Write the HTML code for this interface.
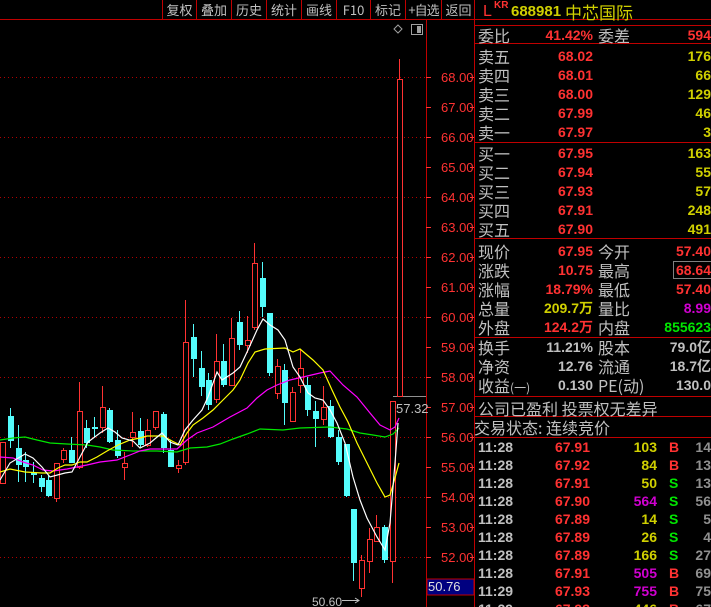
<!DOCTYPE html>
<html style="overflow:hidden;height:607px"><head><meta charset="utf-8"><style>
body{margin:0;background:#000;width:711px;height:607px;overflow:hidden;position:relative;font-family:"Liberation Sans","Noto Sans CJK SC",sans-serif}
.a{position:absolute;white-space:nowrap;line-height:16px}
.tb{position:absolute;top:0;height:19px;line-height:19px;color:#c0c0c0;font-size:13px;text-align:center;white-space:nowrap;font-family:"Noto Sans CJK SC",sans-serif}
.cn{font-size:16px;color:#c0c0c0;font-family:"Noto Sans CJK SC",sans-serif}
.n{font-size:14px;font-weight:bold}
.r{color:#ff3232}.y{color:#d0d000}.g{color:#00e600}.m{color:#d000d0}.w{color:#c0c0c0}.gr{color:#909090}
.hl{position:absolute;left:474px;width:237px;height:1px;background:#c00000}
</style></head><body>
<svg class="a" style="left:0;top:0;line-height:normal" width="711" height="607">
<g stroke="#c00000" stroke-width="1">
<line x1="0" y1="19.5" x2="711" y2="19.5"/>
<line x1="426.5" y1="19" x2="426.5" y2="607"/>
<line x1="474.5" y1="0" x2="474.5" y2="607"/>
<line x1="162.5" y1="0" x2="162.5" y2="19"/><line x1="196.5" y1="0" x2="196.5" y2="19"/><line x1="231.5" y1="0" x2="231.5" y2="19"/><line x1="266.5" y1="0" x2="266.5" y2="19"/><line x1="301.5" y1="0" x2="301.5" y2="19"/><line x1="336.5" y1="0" x2="336.5" y2="19"/><line x1="370.5" y1="0" x2="370.5" y2="19"/><line x1="405.5" y1="0" x2="405.5" y2="19"/><line x1="441.5" y1="0" x2="441.5" y2="19"/>
</g>
<g stroke="#b00000" stroke-dasharray="1,3">
<line x1="0" y1="77.5" x2="426" y2="77.5"/><line x1="0" y1="137.5" x2="426" y2="137.5"/><line x1="0" y1="197.5" x2="426" y2="197.5"/><line x1="0" y1="257.5" x2="426" y2="257.5"/><line x1="0" y1="317.5" x2="426" y2="317.5"/><line x1="0" y1="377.5" x2="426" y2="377.5"/><line x1="0" y1="437.5" x2="426" y2="437.5"/><line x1="0" y1="497.5" x2="426" y2="497.5"/><line x1="0" y1="557.5" x2="426" y2="557.5"/>
</g>
<g stroke="#ff3232">
<path d="M426 77.5h5M426 107.5h5M426 137.5h5M426 167.5h5M426 197.5h5M426 227.5h5M426 257.5h5M426 287.5h5M426 317.5h5M426 347.5h5M426 377.5h5M426 407.5h5M426 437.5h5M426 467.5h5M426 497.5h5M426 527.5h5M426 557.5h5"/>
<path d="M470 77.5h4M470 107.5h4M470 137.5h4M470 167.5h4M470 197.5h4M470 227.5h4M470 257.5h4M470 287.5h4M470 317.5h4M470 347.5h4M470 377.5h4M470 407.5h4M470 437.5h4M470 467.5h4M470 497.5h4M470 527.5h4M470 557.5h4"/>
</g>
<g fill="#ff3232" font-size="13" font-family="Liberation Sans,sans-serif">
<text x="441" y="82">68.00</text><text x="441" y="112">67.00</text><text x="441" y="142">66.00</text><text x="441" y="172">65.00</text><text x="441" y="202">64.00</text><text x="441" y="232">63.00</text><text x="441" y="262">62.00</text><text x="441" y="292">61.00</text><text x="441" y="322">60.00</text><text x="441" y="352">59.00</text><text x="441" y="382">58.00</text><text x="441" y="412">57.00</text><text x="441" y="442">56.00</text><text x="441" y="472">55.00</text><text x="441" y="502">54.00</text><text x="441" y="532">53.00</text><text x="441" y="562">52.00</text>
</g>
<rect x="427" y="579" width="47" height="16" fill="#000080" stroke="#c00000"/>
<text x="428" y="591" fill="#e0e0e0" font-size="13" font-family="Liberation Sans,sans-serif">50.76</text>
<path d="M398 25l4 4-4 4-4-4z" fill="none" stroke="#a0a0a0"/>
<rect x="411.5" y="24.5" width="11" height="10" fill="none" stroke="#a0a0a0"/><rect x="417" y="26" width="4" height="7" fill="#a0a0a0"/>
<line x1="393" y1="396.5" x2="426" y2="396.5" stroke="#909090"/>
<text x="396" y="413" fill="#c0c0c0" font-size="13" font-family="Liberation Sans,sans-serif">57.32</text>
<text x="312" y="606" fill="#c0c0c0" font-size="12" font-family="Liberation Sans,sans-serif">50.60</text>
<path d="M342 600.5h17M355 598l4 2.5-4 2.5" stroke="#c0c0c0" fill="none"/>
<g id="cd"></g>
<g fill="none" stroke-width="1.2">
<polyline stroke="#00e600" points="0,440 13,438 25,437 37,440 50,443 67,444 87,445 100,447 113,450 133,451 157,451 177,452 190,448 207,447 220,444 233,439 247,434 260,429 283,430 300,428 330,427 347,429 360,433 373,435 385,437 393,434 399,428"/>
<polyline stroke="#ff00ff" points="0,457 13,458 23,462 33,465 43,470 53,471 67,469 77,467 87,465 100,462 117,460 130,455 140,451 150,449 160,449 177,449 187,440 197,433 213,427 230,417 247,408 257,398 267,390 277,385 290,380 303,377 320,373 330,371 343,385 357,397 370,413 380,425 390,430 395,427 399,418"/>
<polyline stroke="#ffff00" points="0,472 10,469 25,472 42,473 50,473 58,468 65,465 72,465 80,462 87,462 97,457 107,451 118,445 130,440 140,438 147,436 163,436 172,441 180,445 187,433 193,425 203,418 213,410 223,400 233,390 240,380 248,363 255,352 265,349 285,348 293,352 300,349 313,360 323,370 332,390 340,407 348,422 357,443 367,463 377,483 385,497 390,495 395,478 399,463"/>
<polyline stroke="#ffffff" points="0,480 10,463 25,454 33,458 42,467 50,477 65,473 72,472 80,457 88,442 100,433 108,428 115,432 122,438 133,441 140,448 150,443 162,433 170,442 178,445 185,430 193,420 202,410 208,397 217,372 222,380 233,373 240,367 248,350 257,330 263,319 270,325 278,330 285,340 293,367 300,377 308,393 315,398 323,400 330,410 337,423 345,443 353,477 360,500 367,518 377,537 385,550 390,523 395,463 398,423"/>
</g>
</svg>
<div class="tb" style="left:163px;width:33px">复权</div>
<div class="tb" style="left:197px;width:34px">叠加</div>
<div class="tb" style="left:232px;width:34px">历史</div>
<div class="tb" style="left:267px;width:34px">统计</div>
<div class="tb" style="left:302px;width:34px">画线</div>
<div class="tb" style="left:337px;width:33px">F10</div>
<div class="tb" style="left:371px;width:34px">标记</div>
<div class="tb" style="left:406px;width:35px;letter-spacing:-1px">+自选</div>
<div class="tb" style="left:442px;width:33px">返回</div>

<div class="hl" style="top:25px"></div><div class="hl" style="top:43px"></div><div class="hl" style="top:142px"></div><div class="hl" style="top:238px"></div><div class="hl" style="top:337px"></div><div class="hl" style="top:396px"></div><div class="hl" style="top:416px"></div><div class="hl" style="top:437px"></div>
<div class="a r" style="left:483px;top:4px;font-size:16px">L</div>
<div class="a r" style="left:494px;top:-2px;font-size:10px;font-weight:bold">KR</div>
<div class="a y" style="left:511px;top:4px;font-size:15px;font-weight:bold">688981</div>
<div class="a y" style="left:565px;top:3px;font-size:17px;line-height:18px;font-family:'Noto Sans CJK SC',sans-serif">中芯国际</div>
<div id="p"></div>
<script>
var H='';
function t(x,y,s,c,cls,al){H+='<div class="a '+cls+' '+c+'" style="'+(al?'right:'+(711-x)+'px':'left:'+x+'px')+';top:'+y+'px">'+s+'</div>';}
function row(y,l1,v1,c1,l2,v2,c2){t(478,y-8,l1,'','cn');t(593,y-8,v1,c1,'n',1);if(l2)t(598,y-8,l2,'','cn');t(711,y-8,v2,c2,'n',1);}
row(35,'委比','41.42%','r','委差','594','r');
var s=[['卖五','68.02','176'],['卖四','68.01','66'],['卖三','68.00','129'],['卖二','67.99','46'],['卖一','67.97','3'],['买一','67.95','163'],['买二','67.94','55'],['买三','67.93','57'],['买四','67.91','248'],['买五','67.90','491']];
var ys=[56,75,94,113,132,153,172,191,210,229];
s.forEach(function(a,i){row(ys[i],a[0],a[1],'r','',a[2],'y');});
row(251,'现价','67.95','r','今开','57.40','r');
row(270,'涨跌','10.75','r','最高','68.64','r');
row(289,'涨幅','18.79%','r','最低','57.40','r');
row(308,'总量','209.7万','y','量比','8.99','m');
row(327,'外盘','124.2万','r','内盘','855623','g');
row(347,'换手','11.21%','w','股本','79.0亿','w');
row(366,'净资','12.76','w','流通','18.7亿','w');
row(385,'收益<span style="font-size:12px">(一)</span>','0.130','w','PE(动)','130.0','w');
t(478,400,'公司已盈利 投票权无差异','','cn');
t(474,419,'交易状态: 连续竞价','','cn');
var tr=[['67.91','103','y','B','14'],['67.92','84','y','B','13'],['67.91','50','y','S','13'],['67.90','564','m','S','56'],['67.89','14','y','S','5'],['67.89','26','y','S','4'],['67.89','166','y','S','27'],['67.91','505','m','B','69'],['67.93','755','m','B','75'],['67.93','446','y','B','67']];
tr.forEach(function(a,i){var y=447+i*18;t(478,y-8,i>7?'11:29':'11:28','w','n');t(590,y-8,a[0],'r','n',1);t(657,y-8,a[1],a[2],'n',1);t(669,y-8,a[3],a[3]=='B'?'r':'g','n');t(711,y-8,a[4],'gr','n',1);});
H+='<div class="a" style="left:673px;top:261px;width:40px;height:16px;border:1px solid #808080"></div>';
document.getElementById('p').innerHTML=H;
var C=[['R',2,442,483,442,483],['C',10,416,441,408,448],['C',18,448,465,425,482],['C',25,460,467,452,482],['C',33,473,475,462,483],['C',41,478,487,475,492],['C',48,480,496,475,497],['R',56,463,498,463,502],['R',63,450,459,448,463],['C',71,450,463,437,463],['R',79,411,467,382,469],['C',86,428,443,420,448],['C',94,427,429,417,437],['R',102,407,427,386,433],['C',109,410,442,408,443],['C',117,440,456,430,458],['R',124,463,467,452,480],['R',132,432,437,412,447],['C',140,431,445,418,447],['R',147,430,445,419,447],['R',155,411,427,411,430],['C',163,414,448,412,453],['C',170,450,467,440,467],['R',178,465,468,460,473],['R',185,342,462,300,465],['C',193,337,359,324,377],['C',201,368,387,351,396],['C',208,380,405,373,410],['R',216,361,399,334,403],['C',223,361,385,344,387],['R',231,338,385,318,386],['C',239,322,345,311,350],['R',247,340,345,316,353],['R',254,263,327,243,330],['C',262,278,307,262,317],['C',269,313,373,313,376],['R',277,366,393,359,399],['C',284,370,403,364,425],['R',292,392,421,387,422],['R',300,368,385,349,393],['C',307,385,410,377,416],['C',315,411,419,401,447],['R',323,407,419,386,425],['C',330,406,437,400,438],['C',338,437,462,430,465],['C',346,444,496,444,497],['C',353,509,563,509,581],['R',361,560,588,555,597],['R',369,539,561,528,573],['R',376,527,541,515,542],['C',384,527,560,525,563],['R',392,401,561,401,583],['R',399,79,396,59,396]];
var G='';C.forEach(function(c){var col=c[0]=='R'?'#ff3232':'#54fcfc';var x=c[1]+0.5;G+='<line x1="'+x+'" y1="'+c[4]+'" x2="'+x+'" y2="'+c[5]+'" stroke="'+col+'"/>';
if(c[0]=='R')G+='<rect x="'+(c[1]-2+0.5)+'" y="'+(c[2]+0.5)+'" width="5" height="'+Math.max(1,c[3]-c[2])+'" fill="#000" stroke="'+col+'"/>';
else G+='<rect x="'+(c[1]-2)+'" y="'+c[2]+'" width="6" height="'+Math.max(2,c[3]-c[2])+'" fill="'+col+'"/>';});
document.getElementById('cd').innerHTML=G;
</script>
</body></html>
